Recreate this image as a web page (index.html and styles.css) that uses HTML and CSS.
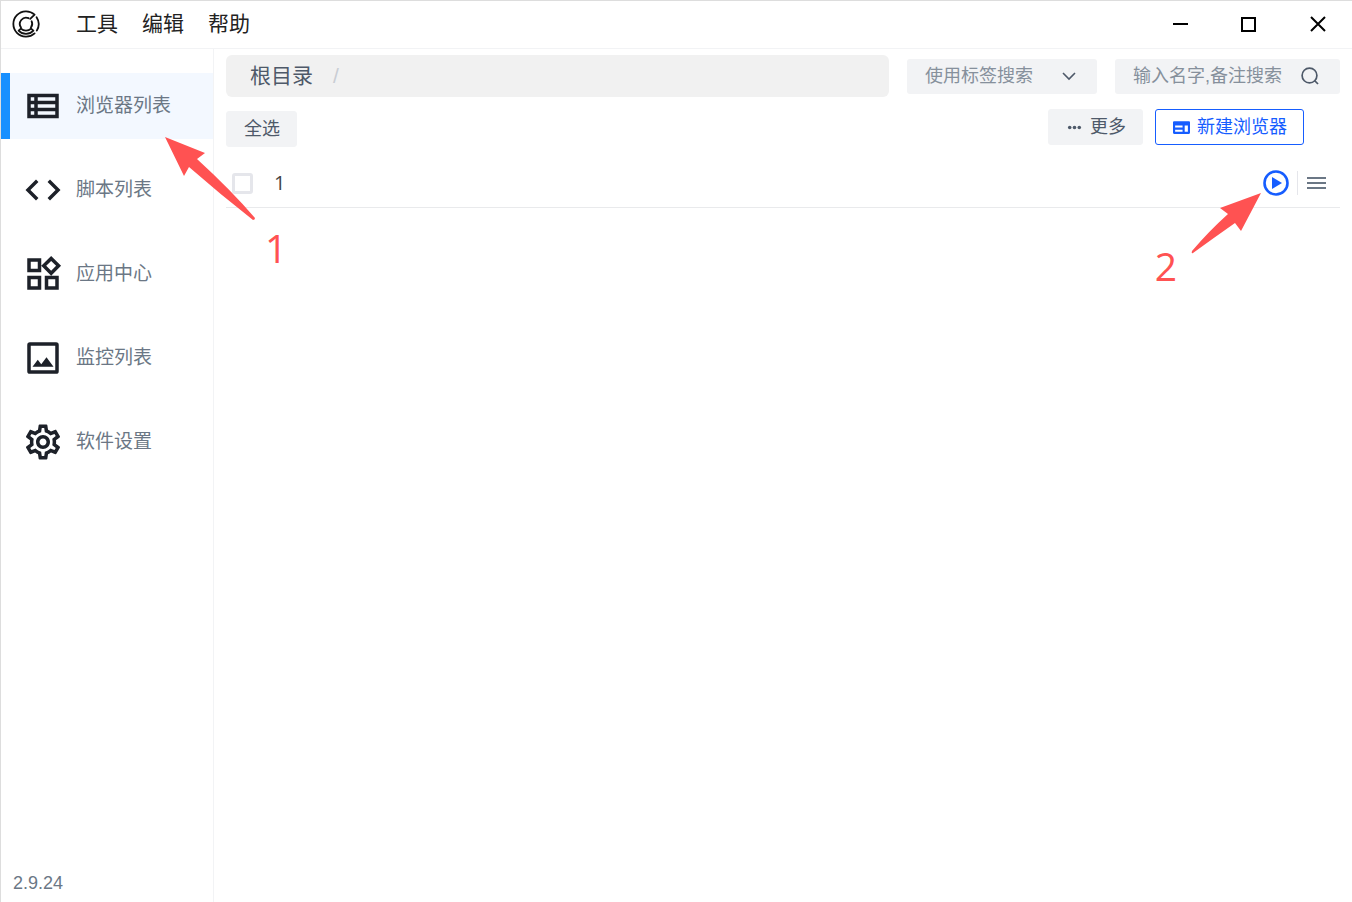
FILE: index.html
```html
<!DOCTYPE html>
<html lang="zh-CN">
<head>
    <meta charset="UTF-8">
    <meta name="viewport" content="width=device-width, initial-scale=1.0">
    <title>浏览器列表</title>
    <link rel="stylesheet" href="styles.css">
</head>
<body>
    <header class="titlebar">
        <svg class="logo" viewBox="0 0 28 28" fill="none" stroke="#111" stroke-width="1.8" stroke-linecap="round" stroke-linejoin="round">
            <path d="M18.2 8.8L22.6 4.6A12.7 12.7 0 1 0 22.6 23.4"/>
            <path d="M24.6 7.2A12.7 12.7 0 0 1 24.8 20.6"/>
            <path d="M9 17.6A6.3 6.3 0 0 1 16.6 8.2"/>
            <path d="M19.6 11.2A6.3 6.3 0 0 1 18.8 17.8"/>
            <path d="M8.9 18.6A7.4 7.4 0 0 0 19.1 18.6L21.4 20.7A10 10 0 0 1 6.6 20.7Z"/>
        </svg>
        <nav class="menu">
            <button type="button">工具</button>
            <button type="button">编辑</button>
            <button type="button">帮助</button>
        </nav>
        <div class="window-controls">
            <button type="button" aria-label="最小化">
                <svg viewBox="0 0 16 16"><path d="M1 7h15v2H1z"/></svg>
            </button>
            <button type="button" aria-label="最大化">
                <svg viewBox="0 0 16 16"><path fill-rule="evenodd" d="M0 1h15v15H0zM2 3v11h11V3z"/></svg>
            </button>
            <button type="button" aria-label="关闭">
                <svg viewBox="0 0 16 16"><path d="M1 1l14 14M15 1L1 15" stroke="#000" stroke-width="2"/></svg>
            </button>
        </div>
    </header>

    <div class="layout">
        <aside class="sidebar">
            <nav class="side-nav">
                <a class="side-link active" href="#browsers">
                    <svg viewBox="0 0 24 24"><path fill-rule="evenodd" d="M3 5h18v14H3zM5 7v2h2V7zM9 7v2h10V7zM5 11v2h2v-2zM9 11v2h10v-2zM5 15v2h2v-2zM9 15v2h10v-2z"/></svg>
                    <span>浏览器列表</span>
                </a>
                <a class="side-link" href="#scripts">
                    <svg viewBox="0 0 24 24"><path d="M9.4 16.6L4.8 12l4.6-4.6L8 6l-6 6 6 6 1.4-1.4zm5.2 0l4.6-4.6-4.6-4.6L16 6l6 6-6 6-1.4-1.4z"/></svg>
                    <span>脚本列表</span>
                </a>
                <a class="side-link" href="#apps">
                    <svg viewBox="0 0 24 24"><path d="M16.66 4.52l2.83 2.83-2.83 2.83-2.83-2.83 2.83-2.83M9 5v4H5V5h4m10 10v4h-4v-4h4M9 15v4H5v-4h4m7.66-13.31L11 7.34 16.66 13l5.66-5.66-5.66-5.65zM11 3H3v8h8V3zm10 10h-8v8h8v-8zm-10 0H3v8h8v-8z"/></svg>
                    <span>应用中心</span>
                </a>
                <a class="side-link" href="#monitor">
                    <svg viewBox="0 0 24 24"><path fill-rule="evenodd" d="M4.5 3h15A1.5 1.5 0 0 1 21 4.5v15a1.5 1.5 0 0 1-1.5 1.5h-15A1.5 1.5 0 0 1 3 19.5v-15A1.5 1.5 0 0 1 4.5 3zM5 5v14h14V5zM6 17l3-4 2 2.500 3-4 4 5.500z"/></svg>
                    <span>监控列表</span>
                </a>
                <a class="side-link" href="#settings">
                    <svg viewBox="0 0 24 24"><path d="M19.43 12.98c.04-.32.07-.64.07-.98 0-.34-.03-.66-.07-.98l2.11-1.65c.19-.15.24-.42.12-.64l-2-3.46c-.09-.16-.26-.25-.44-.25-.06 0-.12.01-.17.03l-2.49 1c-.52-.4-1.08-.73-1.69-.98l-.38-2.65C14.46 2.18 14.25 2 14 2h-4c-.25 0-.46.18-.49.42l-.38 2.65c-.61.25-1.17.59-1.69.98l-2.49-1c-.06-.02-.12-.03-.18-.03-.17 0-.34.09-.43.25l-2 3.46c-.13.22-.07.49.12.64l2.11 1.65c-.04.32-.07.65-.07.98 0 .33.03.66.07.98l-2.11 1.65c-.19.15-.24.42-.12.64l2 3.46c.09.16.26.25.44.25.06 0 .12-.01.17-.03l2.49-1c.52.4 1.08.73 1.69.98l.38 2.65c.03.24.24.42.49.42h4c.25 0 .46-.18.49-.42l.38-2.65c.61-.25 1.17-.59 1.69-.98l2.49 1c.06.02.12.03.18.03.17 0 .34-.09.43-.25l2-3.46c.12-.22.07-.49-.12-.64l-2.11-1.65zm-1.98-1.71c.04.31.05.52.05.73 0 .21-.02.43-.05.73l-.14 1.13.89.7 1.08.84-.7 1.21-1.27-.51-1.04-.42-.9.68c-.43.32-.84.56-1.25.73l-1.06.43-.16 1.13-.2 1.35h-1.4l-.19-1.35-.16-1.13-1.06-.43c-.43-.18-.83-.41-1.23-.71l-.91-.7-1.06.43-1.27.51-.7-1.21 1.08-.84.89-.7-.14-1.13c-.03-.31-.05-.54-.05-.74s.02-.43.05-.73l.14-1.13-.89-.7-1.08-.84.7-1.21 1.27.51 1.04.42.9-.68c.43-.32.84-.56 1.25-.73l1.06-.43.16-1.13.2-1.35h1.39l.19 1.35.16 1.13 1.06.43c.43.18.83.41 1.23.71l.91.7 1.06-.43 1.27-.51.7 1.21-1.07.85-.89.7.14 1.13zM12 8c-2.21 0-4 1.79-4 4s1.79 4 4 4 4-1.79 4-4-1.79-4-4-4zm0 6c-1.1 0-2-.9-2-2s.9-2 2-2 2 .9 2 2-.9 2-2 2z"/></svg>
                    <span>软件设置</span>
                </a>
            </nav>
            <div class="version">2.9.24</div>
        </aside>

        <main class="content" id="browsers">
            <div class="search-row">
                <nav class="breadcrumb">
                    <a href="#root">根目录</a>
                    <span class="separator">/</span>
                </nav>
                <div class="tag-search">
                    <select aria-label="使用标签搜索">
                        <option>使用标签搜索</option>
                    </select>
                    <svg viewBox="0 0 16 16" fill="none" stroke="#4e5969" stroke-width="1.6"><path d="M2 5l6 6 6-6"/></svg>
                </div>
                <div class="name-search">
                    <input type="text" placeholder="输入名字,备注搜索" aria-label="输入名字,备注搜索">
                    <button type="button" aria-label="搜索">
                        <svg viewBox="0 0 18 18" fill="none" stroke="#4e5969" stroke-width="1.7"><circle cx="8.5" cy="8.5" r="7.4"/><path d="M13.5 13.5L17 17"/></svg>
                    </button>
                </div>
            </div>

            <div class="toolbar">
                <button class="btn select-all" type="button">全选</button>
                <div class="toolbar-actions">
                    <button class="btn" type="button">
                        <svg viewBox="0 0 16 16"><circle cx="3.5" cy="8" r="1.7"/><circle cx="8" cy="8" r="1.7"/><circle cx="12.5" cy="8" r="1.7"/></svg>
                        <span>更多</span>
                    </button>
                    <button class="btn btn-primary" type="button">
                        <svg viewBox="0 0 16 16"><path fill-rule="evenodd" d="M1 2h14a1 1 0 0 1 1 1v10a1 1 0 0 1-1 1H1a1 1 0 0 1-1-1V3a1 1 0 0 1 1-1zM2 6v2h7V6zM2 10v2h7v-2zM11 6v6h3V6z"/></svg>
                        <span>新建浏览器</span>
                    </button>
                </div>
            </div>

            <ul class="browser-list">
                <li class="browser-item">
                    <input type="checkbox" id="browser-1">
                    <label for="browser-1">1</label>
                    <button class="run" type="button" aria-label="启动">
                        <svg viewBox="0 0 26 26"><circle cx="13" cy="13" r="11.5" fill="none" stroke="#165dff" stroke-width="2.6"/><path d="M9 7l10 6-10 6z" fill="#165dff"/></svg>
                    </button>
                    <button class="more" type="button" aria-label="菜单">
                        <svg viewBox="0 0 19 12"><path d="M0 0h19v2H0zM0 5h19v2H0zM0 10h19v2H0z"/></svg>
                    </button>
                </li>
            </ul>
        </main>
    </div>

    <!-- step markers over the page -->
    <div class="step step-one">
        <svg width="90" height="83" viewBox="0 0 90 83"><path d="M0 0L40 16 32 22Q66 53 90 81Q90 83 88 83Q56 58 24 30L19 39Z"/></svg>
        <span>1</span>
    </div>
    <div class="step step-two">
        <svg width="70" height="61" viewBox="0 0 70 61"><path d="M70 0L50 38 44 30Q24 44 2 60Q0 61 1 58Q18 38 37 21L29 15Z"/></svg>
        <span>2</span>
    </div>
</body>
</html>
```
FILE: styles.css
```css
* {
    box-sizing: border-box;
}

body {
    font-family: "Liberation Sans", "Noto Sans CJK SC", sans-serif;
    margin: 0;
    min-height: 100vh;
    display: flex;
    flex-direction: column;
    position: relative;
    background: #fff;
    color: #4e5969;
    border-top: 1px solid #ddd;
    border-left: 1px solid #ddd;
    font-size: 18px;
}

button,
input,
select {
    font-family: inherit;
    font-size: inherit;
    color: inherit;
    border: none;
    background: none;
    margin: 0;
    padding: 0;
}

button {
    cursor: pointer;
}

svg {
    display: block;
    flex: none;
}

a {
    color: inherit;
    text-decoration: none;
}

/* title bar */
.titlebar {
    display: flex;
    align-items: center;
    height: 48px;
    padding: 0 0 2px 11px;
    border-bottom: 1px solid #f2f3f5;
}

.logo {
    width: 28px;
    height: 28px;
}

.menu {
    display: flex;
    gap: 24px;
    margin-left: 36px;
}

.menu button {
    font-size: 21px;
    line-height: 30px;
    color: #222;
}

.window-controls {
    display: flex;
    align-self: stretch;
    margin-left: auto;
}

.window-controls button {
    display: flex;
    align-items: center;
    justify-content: center;
    width: 69px;
}

.window-controls svg {
    width: 16px;
    height: 16px;
}

.layout {
    display: flex;
    flex: 1;
}

/* sidebar */
.sidebar {
    display: flex;
    flex-direction: column;
    width: 213px;
    padding-top: 24px;
    border-right: 1px solid #f2f3f5;
}

.side-nav {
    display: flex;
    flex-direction: column;
    gap: 18px;
}

.side-link {
    display: flex;
    align-items: center;
    gap: 12px;
    height: 66px;
    padding-left: 12px;
    border-left: 9px solid transparent;
    font-size: 19px;
    line-height: 28px;
    color: #6b7785;
}

.side-link.active {
    border-left-color: #1890ff;
    background: #f3f8ff;
}

.side-link svg {
    width: 42px;
    height: 42px;
    fill: #1d2129;
}

.version {
    margin-top: auto;
    padding: 0 12px 8px;
    line-height: 22px;
    color: #6b7785;
}

/* main area */
.content {
    flex: 1;
    padding: 6px 12px;
}

.search-row {
    display: flex;
    align-items: center;
    gap: 18px;
}

.breadcrumb {
    display: flex;
    align-items: center;
    flex: 1;
    gap: 20px;
    height: 42px;
    padding: 0 24px;
    border-radius: 6px;
    background: #f1f1f1;
    font-size: 21px;
}

.breadcrumb a {
    padding-bottom: 4px;
}

.separator {
    color: #c9cdd4;
}

.tag-search,
.name-search {
    display: flex;
    align-items: center;
    height: 35px;
    padding: 0 18px;
    border-radius: 3px;
    background: #f2f3f5;
}

.tag-search {
    position: relative;
    width: 190px;
}

.tag-search select {
    appearance: none;
    width: 100%;
    color: #86909c;
}

.tag-search svg {
    position: absolute;
    right: 20px;
    width: 16px;
    height: 16px;
    pointer-events: none;
}

.name-search {
    width: 225px;
}

.name-search input {
    flex: 1;
    min-width: 0;
    outline: none;
}

.name-search input::placeholder {
    color: #86909c;
}

.name-search svg {
    width: 18px;
    height: 18px;
    margin-right: 3px;
}

.toolbar {
    display: flex;
    justify-content: space-between;
    height: 38px;
    margin-top: 12px;
    padding-right: 36px;
}

.toolbar-actions {
    display: flex;
    gap: 12px;
}

.btn {
    display: flex;
    align-items: center;
    gap: 7px;
    height: 36px;
    padding: 0 16px 0 17px;
    border: 1px solid #f2f3f5;
    border-radius: 3px;
    background: #f2f3f5;
}

.btn svg {
    width: 17px;
    height: 17px;
    fill: currentColor;
}

.btn span {
    padding-bottom: 4px;
}

.select-all {
    align-self: flex-end;
    padding-bottom: 4px;
}

.btn-primary {
    border-color: #165dff;
    background: #fff;
    color: #165dff;
}

/* browser list */
.browser-list {
    list-style: none;
    margin: 12px 0 0;
    padding: 0;
}

.browser-item {
    display: flex;
    align-items: center;
    height: 49px;
    padding: 0 14px 0 6px;
    border-bottom: 1px solid #e9eaec;
}

.browser-item input {
    appearance: none;
    width: 21px;
    height: 21px;
    border: 3px solid #e5e6eb;
    border-radius: 3px;
    background: #fff;
}

.browser-item input:checked {
    border-color: #165dff;
    background: #165dff;
}

.browser-item label {
    flex: 1;
    padding-left: 21px;
    font-family: "Open Sans", sans-serif;
    font-size: 20px;
    line-height: 28px;
    color: #444;
}

.run svg {
    width: 26px;
    height: 26px;
}

.more {
    display: flex;
    align-items: center;
    height: 24px;
    margin-left: 8px;
    padding-left: 9px;
    border-left: 1px solid #e5e6eb;
}

.more svg {
    width: 19px;
    height: 12px;
    fill: #6b7785;
}

/* step markers */
.step {
    position: absolute;
    display: flex;
    flex-direction: column;
    font-family: "Open Sans", sans-serif;
    font-size: 39px;
    color: #ff5252;
    pointer-events: none;
}

.step svg {
    fill: #ff5252;
}

.step-one {
    top: 136px;
    left: 164px;
}

.step-one span {
    padding-left: 100px;
    line-height: 56px;
}

.step-two {
    top: 192px;
    right: 91px;
    align-items: flex-end;
}

.step-two span {
    padding-right: 84px;
    line-height: 24px;
}
```
